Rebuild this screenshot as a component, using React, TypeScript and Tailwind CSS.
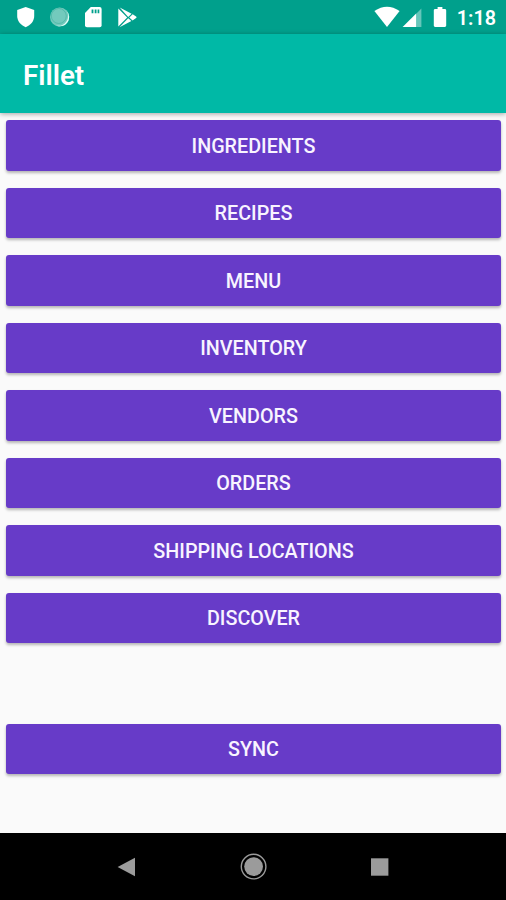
const menuItems = [
  'Ingredients',
  'Recipes',
  'Menu',
  'Inventory',
  'Vendors',
  'Orders',
  'Shipping Locations',
  'Discover',
];

function MenuButton({ label }: { label: string }) {
  return (
    <button
      type="button"
      className="flex h-[50.5px] w-full shrink-0 items-center justify-center rounded-[3px] bg-[#673bc8] pt-[3px] text-[19.75px] leading-none font-medium text-[#f8f4ff] uppercase shadow-[0_2px_3px_rgba(0,0,0,0.28)]"
    >
      {label}
    </button>
  );
}

function StatusBar() {
  return (
    <header className="flex h-[34px] shrink-0 items-center justify-between bg-[#00a08c] pr-[10px] pl-[16px] text-white">
      <div className="flex items-center gap-[13px]">
        {/* Shield */}
        <svg width="20" height="22" viewBox="0 0 20 22" fill="currentColor">
          <path d="M9.7 1 18.2 4v6c0 5-3.4 9-8.5 11.2C4.6 19 1.2 15 1.2 10V4z" />
        </svg>
        {/* Sync circle */}
        <svg width="22" height="22" viewBox="0 0 22 22">
          <circle cx="10.6" cy="11" r="9.6" fill="#73cabd" />
          <path d="M17.7 4.7A9.3 9.3 0 0 1 7.6 19.7a10 10 0 0 0 10.1-15z" fill="#e4fffa" />
          <circle cx="9.8" cy="10" r="7.5" fill="none" stroke="#4ab6a6" strokeWidth=".8" />
        </svg>
        {/* SD card */}
        <svg width="18" height="22" viewBox="0 0 18 22" fill="currentColor">
          <path d="M6.8 1h8.8a2 2 0 0 1 2 2v16.2a2 2 0 0 1-2 2H3a2 2 0 0 1-2-2V7z" />
          <path d="M7.6 3.4h1.8v3.8H7.6zM10.7 3.4h1.8v3.8h-1.8zM13.6 3.4h1.7v3.8h-1.7z" fill="#00a08c" />
        </svg>
        {/* Play store */}
        <svg className="ml-[2px]" width="22" height="22" viewBox="0 0 22 22" fill="currentColor">
          <path d="M2.7 1.5 14.6 7.8 11.2 10.9zM1.3 2.4l8.9 9.2-8.9 8.9zM11.2 12.3l3.2 2.6-11.9 6.3zM15.7 8.2l3.4 2.3q1.1.8 0 1.6l-3.5 2.4-3.3-2.9z" />
        </svg>
      </div>
      <div className="flex items-center">
        <svg width="26" height="22" viewBox="0 0 26 22" fill="currentColor">
          <path d="M.4 5.1Q13-3.7 25.6 5.1L13 21z" />
        </svg>
        <svg className="ml-[2px]" width="20" height="22" viewBox="0 0 20 22" fill="currentColor">
          <path d="M19.4 2.6V21h-5.2V7.8z" opacity=".4" />
          <path d="M14.2 7.6V21H.6z" />
        </svg>
        <svg className="ml-[11px]" width="15" height="22" viewBox="0 0 15 22" fill="currentColor">
          <path d="M4.6 1h4.8v2h2.4c.8 0 1.4.6 1.4 1.4v15.2c0 .8-.6 1.4-1.4 1.4H2.2c-.8 0-1.4-.6-1.4-1.4V4.4C.8 3.6 1.4 3 2.2 3h2.4z" />
        </svg>
        <span className="ml-[9px] pt-[4px] text-[19.75px] leading-none font-semibold">1:18</span>
      </div>
    </header>
  );
}

function NavigationBar() {
  return (
    <nav className="grid h-[67px] shrink-0 grid-cols-3 items-center bg-black pr-[62px] pl-[64px] text-[#9b9b9b]">
      <svg className="justify-self-center" width="20" height="20" viewBox="0 0 20 20" fill="currentColor">
        <path d="M.6 10 18 .8v18.4z" />
      </svg>
      <svg className="justify-self-center" width="28" height="28" viewBox="0 0 28 28">
        <circle cx="13.6" cy="13.6" r="12.3" fill="none" stroke="currentColor" strokeWidth="1.4" />
        <circle cx="13.6" cy="13.6" r="9.4" fill="currentColor" />
      </svg>
      <svg className="mr-[2px] justify-self-center" width="18" height="18" viewBox="0 0 18 18" fill="currentColor">
        <path d="M0 .3h17.4v17.4H0z" />
      </svg>
    </nav>
  );
}

export default function App() {
  return (
    <div className="flex h-[900px] w-[506px] flex-col overflow-hidden bg-[#fafafa] font-[Roboto,sans-serif]">
      <StatusBar />
      <div className="flex h-[79px] shrink-0 items-center bg-[#00b9a6] pt-[4px] pl-[23px] text-white shadow-[0_1px_5px_rgba(0,0,0,0.35)]">
        <h1 className="text-[27.75px] leading-none font-semibold">Fillet</h1>
      </div>
      <main className="flex flex-1 flex-col pt-[7px] pr-[5px] pl-[6px]">
        <div className="flex flex-col gap-[17px]">
          {menuItems.map((item) => (
            <MenuButton key={item} label={item} />
          ))}
        </div>
        <div className="mt-[80.5px]">
          <MenuButton label="Sync" />
        </div>
      </main>
      <NavigationBar />
    </div>
  );
}
